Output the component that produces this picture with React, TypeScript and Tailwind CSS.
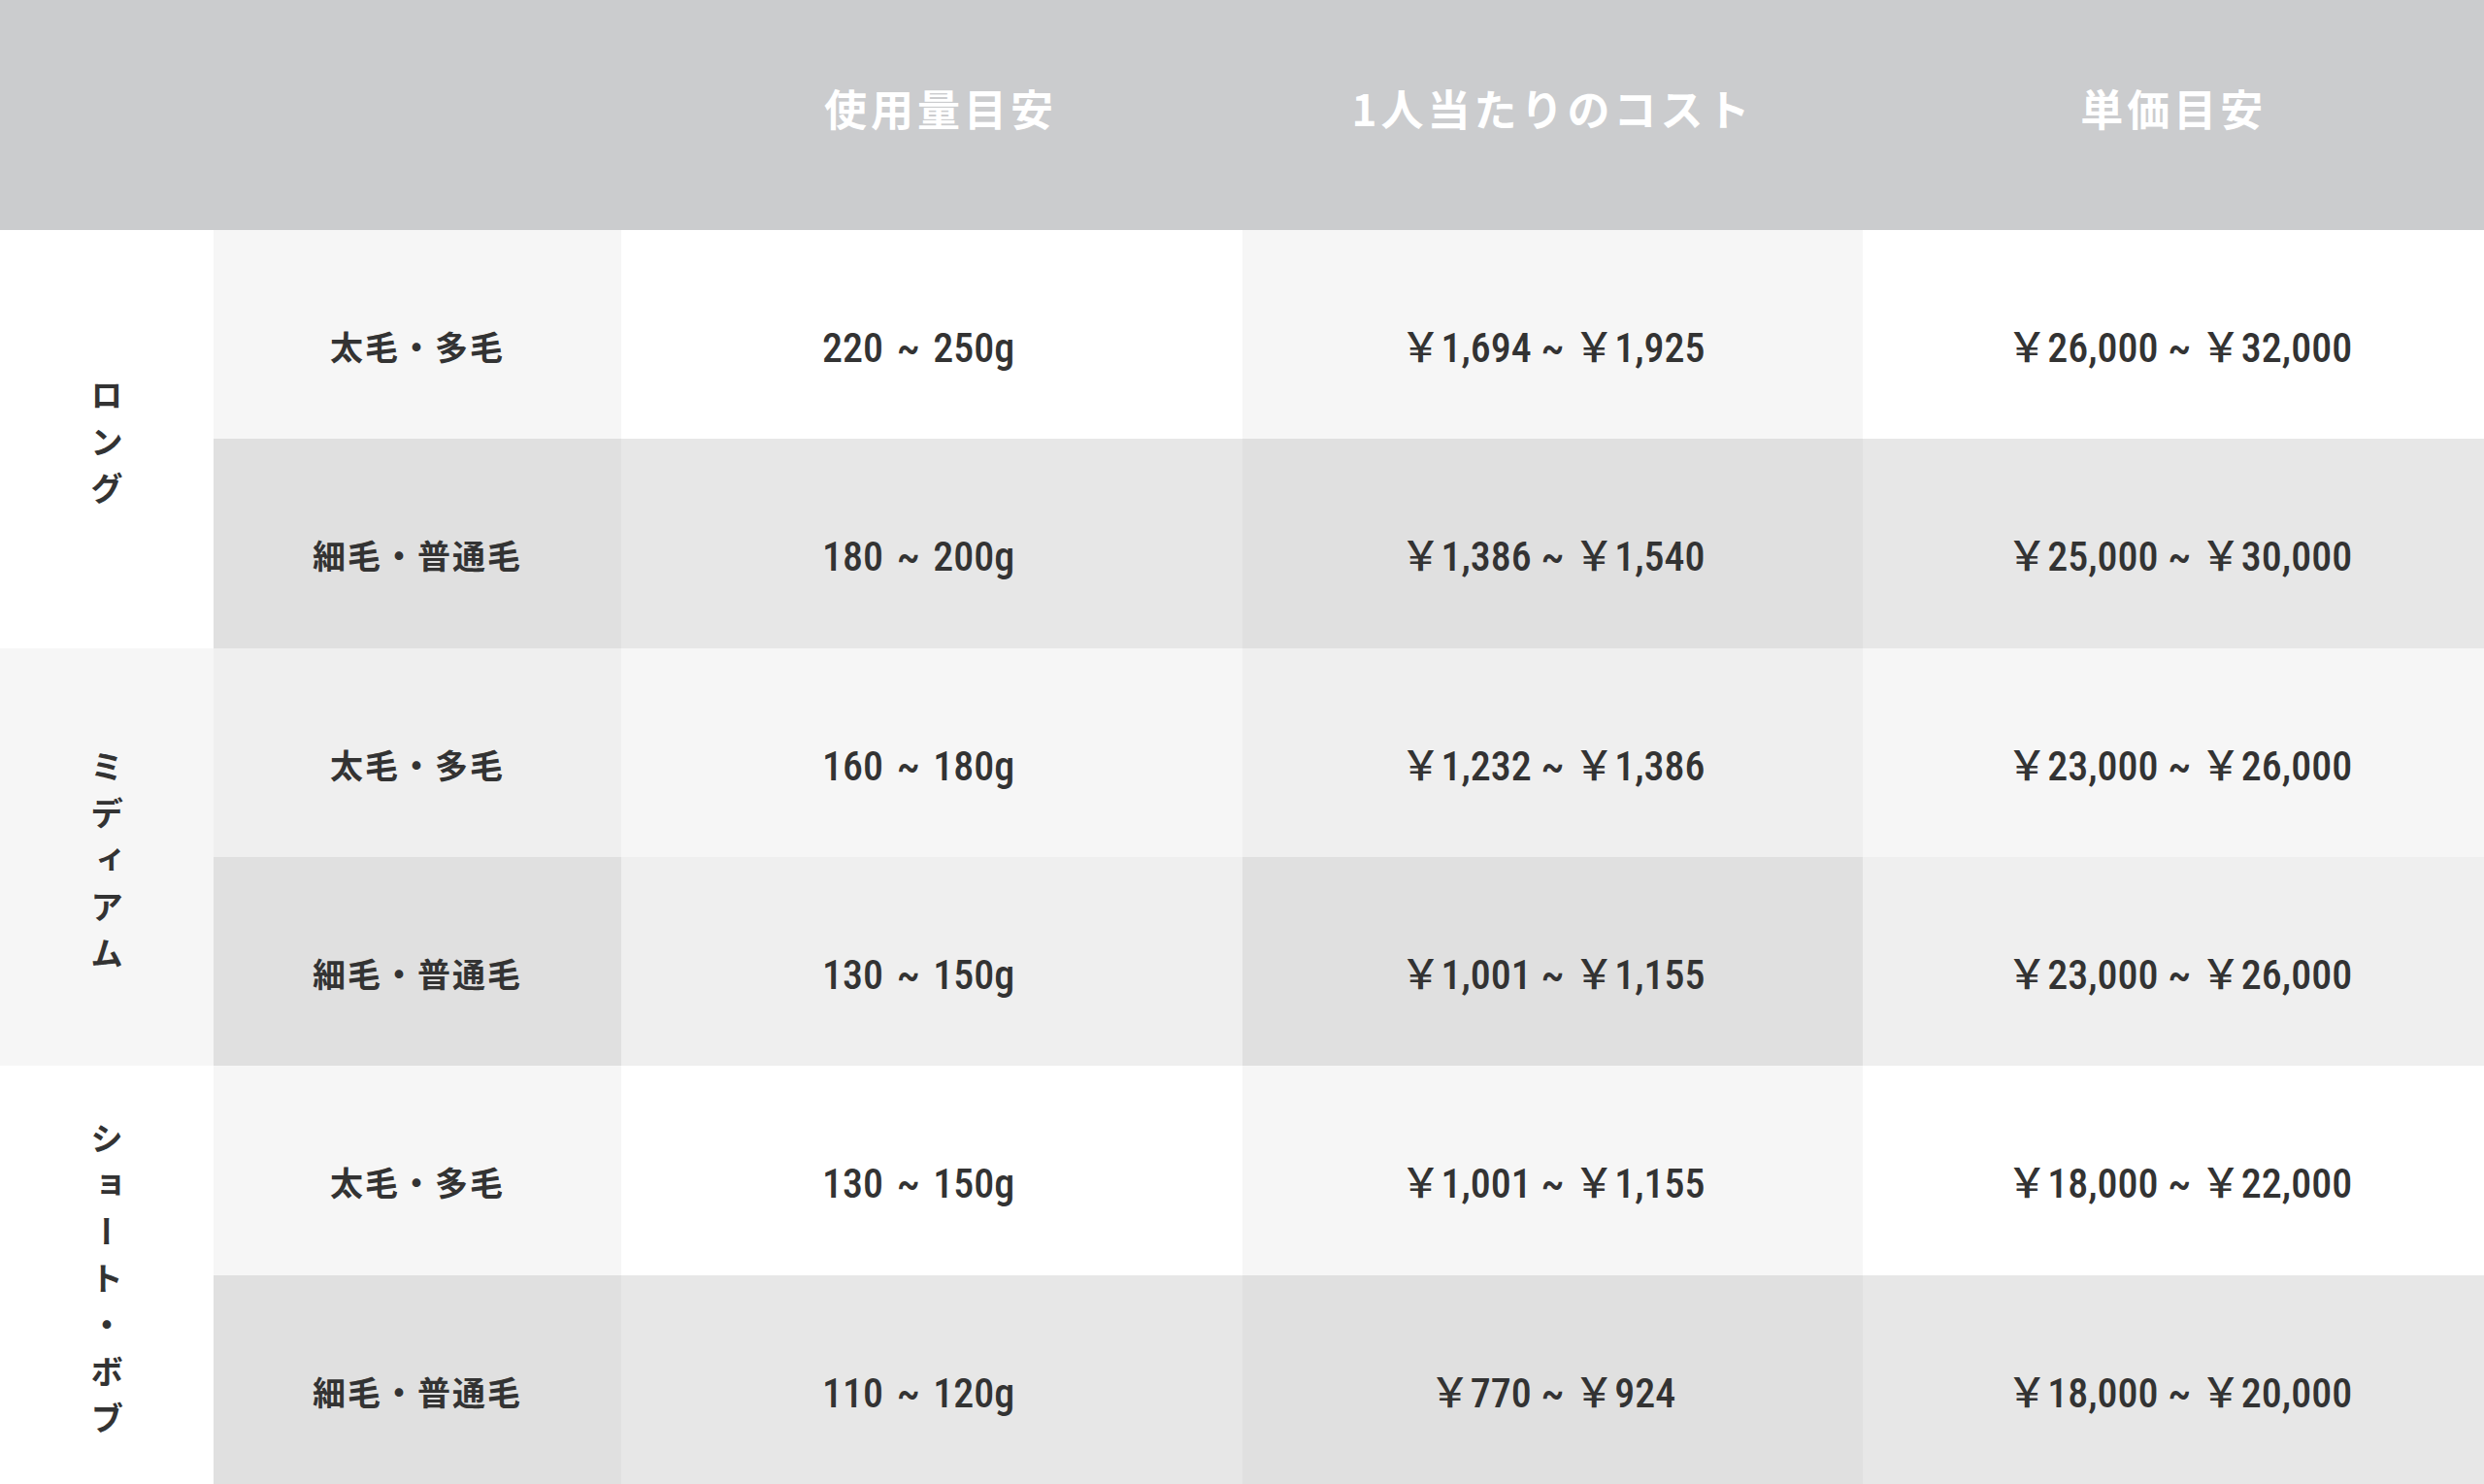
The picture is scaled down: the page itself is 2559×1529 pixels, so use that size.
type Row = { hair: string; amount: string; cost: string; price: string };
type Group = { label: string; tone: "light" | "mid"; rows: Row[] };

const groups: Group[] = [
  {
    label: "ロング",
    tone: "light",
    rows: [
      { hair: "太毛・多毛", amount: "220 ~ 250g", cost: "￥1,694 ~ ￥1,925", price: "￥26,000 ~ ￥32,000" },
      { hair: "細毛・普通毛", amount: "180 ~ 200g", cost: "￥1,386 ~ ￥1,540", price: "￥25,000 ~ ￥30,000" },
    ],
  },
  {
    label: "ミディアム",
    tone: "mid",
    rows: [
      { hair: "太毛・多毛", amount: "160 ~ 180g", cost: "￥1,232 ~ ￥1,386", price: "￥23,000 ~ ￥26,000" },
      { hair: "細毛・普通毛", amount: "130 ~ 150g", cost: "￥1,001 ~ ￥1,155", price: "￥23,000 ~ ￥26,000" },
    ],
  },
  {
    label: "ショート・ボブ",
    tone: "light",
    rows: [
      { hair: "太毛・多毛", amount: "130 ~ 150g", cost: "￥1,001 ~ ￥1,155", price: "￥18,000 ~ ￥22,000" },
      { hair: "細毛・普通毛", amount: "110 ~ 120g", cost: "￥770 ~ ￥924", price: "￥18,000 ~ ￥20,000" },
    ],
  },
];

// cell backgrounds: [row index] -> odd / even column shade
const shades = {
  light: {
    label: "bg-white",
    rows: [
      { odd: "bg-white", even: "bg-[#f6f6f6]" },
      { odd: "bg-[#e7e7e7]", even: "bg-[#e0e0e0]" },
    ],
  },
  mid: {
    label: "bg-[#f6f6f6]",
    rows: [
      { odd: "bg-[#f6f6f6]", even: "bg-[#efefef]" },
      { odd: "bg-[#efefef]", even: "bg-[#e0e0e0]" },
    ],
  },
};

const jp = "font-['Noto_Sans_CJK_JP','Noto_Sans',sans-serif]";
const num = "font-['Roboto','Noto_Sans_CJK_JP',sans-serif] font-medium [font-stretch:75%] text-[42px]";
const head = `flex items-center bg-[#cbccce] pb-4 text-[44px] font-bold tracking-[4px] text-white ${jp}`;

export default function App() {
  return (
    <div className="grid h-screen w-full grid-cols-[220px_420px_1fr_1fr_1fr] grid-rows-[237px_repeat(6,1fr)] text-[#333]">
      {/* header */}
      <div className="col-span-2 bg-[#cbccce]" />
      <div className={`${head} pl-[209px]`}>使用量目安</div>
      <div className={`${head} justify-center`}>1人当たりのコスト</div>
      <div className={`${head} justify-center`}>単価目安</div>

      {groups.map((g) =>
        g.rows.map((r, i) => {
          const s = shades[g.tone].rows[i];
          return (
            <div key={g.label + i} className="contents">
              {i === 0 && (
                <div className={`row-span-2 flex items-center justify-center pt-5 ${shades[g.tone].label}`}>
                  <span className={`text-[34px] font-bold tracking-[14px] [writing-mode:vertical-rl] ${jp}`}>
                    {g.label}
                  </span>
                </div>
              )}
              <div className={`flex items-center justify-center pt-6 text-[34px] font-bold tracking-[2px] ${jp} ${s.even}`}>
                {r.hair}
              </div>
              <div className={`flex items-center pl-[207px] pt-7 [word-spacing:4px] ${num} ${s.odd}`}>{r.amount}</div>
              <div className={`flex items-center justify-center pt-7 ${num} ${s.even}`}>{r.cost}</div>
              <div className={`flex items-center justify-center pl-3 pt-7 ${num} ${s.odd}`}>{r.price}</div>
            </div>
          );
        })
      )}
    </div>
  );
}
